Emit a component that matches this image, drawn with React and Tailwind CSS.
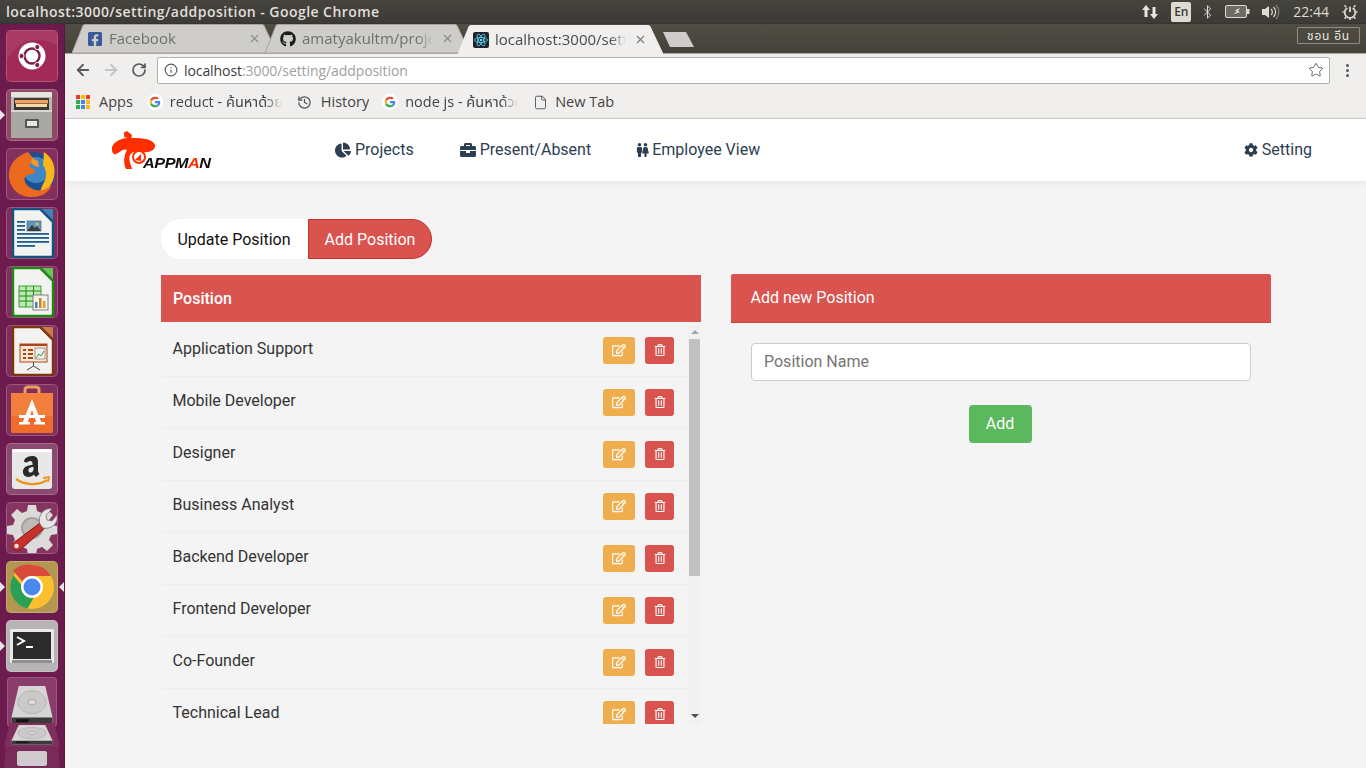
import React from "react";
import { FaChartPie, FaBriefcase, FaCog, FaRegEdit, FaRegTrashAlt, FaFacebookSquare, FaGithub, FaMale, FaFemale } from "react-icons/fa";
import { ArrowLeft, ArrowRight, RotateCw, Info, Star, History, File, X, Bluetooth } from "lucide-react";

const UI = "font-['Open_Sans','Noto_Sans','Noto_Sans_Thai',sans-serif]";

function GoogleG({ className = "" }) {
  return (
    <svg viewBox="0 0 48 48" className={className}>
      <circle cx="24" cy="24" r="24" fill="#fff" />
      <path fill="#EA4335" d="M24 14c2.600 0 4.800 1 6.500 2.500l4.600-4.600C32.200 9.300 28.400 8 24 8c-6.300 0-11.700 3.600-14.300 8.900l5.400 4.200C16.400 17 19.900 14 24 14z" />
      <path fill="#4285F4" d="M39.600 24.500c0-1.100-.1-2.200-.3-3.300H24v6.300h8.800c-.4 2-1.500 3.800-3.300 5l5.200 4c3-2.800 4.900-7 4.900-12z" />
      <path fill="#FBBC05" d="M15.100 26.900c-.3-1-.5-1.900-.5-2.900s.2-2 .5-2.900l-5.400-4.200C8.600 19.100 8 21.500 8 24s.6 4.900 1.700 7.100l5.400-4.200z" />
      <path fill="#34A853" d="M24 40c4.300 0 8-1.400 10.700-3.900l-5.200-4c-1.400 1-3.300 1.600-5.500 1.600-4.100 0-7.600-2.800-8.900-6.700l-5.400 4.200C12.300 36.400 17.700 40 24 40z" />
    </svg>
  );
}

function ReactIcon() {
  return (
    <svg viewBox="0 0 16 16" className="w-4 h-4 shrink-0">
      <rect width="16" height="16" rx="2" fill="#20232a" />
      <g fill="none" stroke="#61dafb" strokeWidth="0.8">
        <ellipse cx="8" cy="8" rx="6.500" ry="2.500" />
        <ellipse cx="8" cy="8" rx="6.500" ry="2.500" transform="rotate(60 8 8)" />
        <ellipse cx="8" cy="8" rx="6.500" ry="2.500" transform="rotate(120 8 8)" />
      </g>
      <circle cx="8" cy="8" r="1.300" fill="#61dafb" />
    </svg>
  );
}

function TabShape({ fill, stroke }) {
  return (
    <svg viewBox="0 0 205 29" preserveAspectRatio="none" className="absolute inset-0 w-full h-full">
      <path d="M0 29 L11 1.500 Q11.500 0.500 13 0.500 L190 0.500 Q191.500 0.500 192 1.500 L205 29 Z" fill={fill} stroke={stroke} strokeWidth="1" />
    </svg>
  );
}

function Tab({ icon, label, active, className = "" }) {
  return (
    <div className={`relative w-[205px] h-[29px] flex items-center pl-[16px] pr-[16px] shrink-0 ${active ? "z-10 -mb-[1px]" : ""} ${className}`}>
      <TabShape fill={active ? "#f1efee" : "#cfcdca"} stroke={active ? "#f1efee" : "#a5a39f"} />
      <div className="relative -ml-[1px] shrink-0 flex items-center">{icon}</div>
      <div className={`relative ml-[6px] mr-[8px] flex-1 overflow-hidden whitespace-nowrap text-[15px] [mask-image:linear-gradient(to_right,black_88%,transparent)] ${active ? "text-[#4a4a4a]" : "text-[#6f6f6f]"}`}>{label}</div>
      <X className={`relative shrink-0 w-[13px] h-[13px] ${active ? "text-[#7a7a7a]" : "text-[#8a8a8a]"}`} strokeWidth={2} />
    </div>
  );
}

function Tile({ bg = "bg-[#7f2f5d]", children, arrowL, arrowR, className = "" }) {
  return (
    <div className="relative h-[52px] w-[65px] shrink-0 mb-[7px] flex items-center justify-center">
      {arrowL && <div className="absolute left-0 top-1/2 -translate-y-1/2 w-0 h-0 border-y-[5px] border-y-transparent border-l-[5px] border-l-[#e8e4e6]" />}
      {arrowR && <div className="absolute right-[1px] top-1/2 -translate-y-1/2 w-0 h-0 border-y-[5px] border-y-transparent border-r-[5px] border-r-[#e8e4e6]" />}
      <div className={`w-[52px] h-[52px] rounded-[5px] border border-white/20 flex items-center justify-center overflow-hidden ${bg} ${className}`}>
        {children}
      </div>
    </div>
  );
}

const UbuntuLogo = () => (
  <svg viewBox="0 0 52 52" className="w-[52px] h-[52px] shrink-0">
    <path d="M0 32C10 10 32 4 52 16V0H0Z" fill="#fff" opacity="0.08" />
    <circle cx="26" cy="26" r="13.500" fill="#fff" />
    <circle cx="26" cy="26" r="7.500" fill="none" stroke="#7e1e4c" strokeWidth="2.400" />
    <g fill="#7e1e4c" stroke="#fff" strokeWidth="1">
      <circle cx="15.500" cy="26" r="2.600" />
      <circle cx="31.300" cy="17" r="2.600" />
      <circle cx="31.300" cy="35" r="2.600" />
    </g>
  </svg>
);

const FilesIcon = () => (
  <svg viewBox="0 0 52 52" className="w-[52px] h-[52px] shrink-0">
    <rect x="5" y="3" width="41" height="46" rx="2" fill="#b9b8b5" />
    <rect x="5" y="3" width="41" height="5" rx="1" fill="#e4e3e0" />
    <rect x="8" y="9" width="35" height="12" fill="#3a3938" />
    <rect x="9" y="11" width="33" height="3.500" fill="#f3a05a" />
    <rect x="10" y="15" width="31" height="3" fill="#f6d9a8" />
    <path d="M5 21H46V49H5Z" fill="#a9a8a5" />
    <path d="M5 21H46V23H5Z" fill="#d8d7d4" />
    <rect x="19" y="30" width="14" height="9" rx="1" fill="#555" />
    <rect x="21" y="32" width="10" height="5" fill="#e8e8e6" />
  </svg>
);

const FirefoxIcon = () => (
  <svg viewBox="0 0 52 52" className="w-[52px] h-[52px] shrink-0">
    <circle cx="27" cy="26" r="22" fill="#1f4f93" />
    <circle cx="30" cy="22" r="13" fill="#3f86c5" />
    <path d="M38 4c9 6 12 15 10 25-2 9-9 16-15 17l4-10c4-6 4-13 0-19z" fill="#f8b51c" />
    <path d="M22 4C10 8 2 17 3 29c1 13 12 21 24 20 9 0 16-5 19-12-5 5-13 7-19 4-6-2-10-8-8-12 2-3 8-2 10-5 1-2-1-3-4-4-2-1-2-5 3-9l-6-7z" fill="#ec6a1e" />
    <path d="M26 10l6 3 1 6-4-1-4-3z" fill="#f49b24" />
  </svg>
);

const LibreDoc = ({ edge, corner, children }) => (
  <svg viewBox="0 0 52 52" className="w-[52px] h-[52px] shrink-0">
    <path d="M7 2H34L47 15V48Q47 50 45 50H9Q7 50 7 48Z" fill="#f2f2f0" stroke={edge} strokeWidth="2.400" />
    <path d="M36 2H47V13Z" fill={corner} />
    {children}
  </svg>
);

const Writer = () => (
  <LibreDoc edge="#14537f" corner="#3a85b5">
    <g fill="#1c5d8e">
      <rect x="11" y="14" width="8" height="1.800" />
      <rect x="11" y="18" width="8" height="1.800" />
      <rect x="11" y="22" width="8" height="1.800" />
      <rect x="11" y="26" width="32" height="1.800" />
      <rect x="11" y="30" width="32" height="1.800" />
      <rect x="11" y="34" width="32" height="1.800" />
      <rect x="11" y="38" width="18" height="1.800" />
    </g>
    <rect x="21" y="14" width="14" height="10" fill="#5d97c5" stroke="#555" strokeWidth="0.600" />
    <path d="M21 24l5-6 3 3 2-2 4 5z" fill="#3e3e3e" />
    <circle cx="31" cy="17" r="1.500" fill="#f5c542" />
  </LibreDoc>
);

const Calc = () => (
  <LibreDoc edge="#1d8a12" corner="#62c854">
    <rect x="13" y="20" width="22" height="21" fill="#bfe9b4" stroke="#1d8a12" strokeWidth="0.800" />
    <path d="M13 25H35M13 30H35M13 35H35M20 20V41M27.500 20V41" stroke="#1d8a12" strokeWidth="1" fill="none" />
    <rect x="27" y="29" width="15" height="15" fill="#f2f2f0" stroke="#666" strokeWidth="0.800" />
    <rect x="29" y="36" width="2.500" height="6" fill="#3a85c5" />
    <rect x="33" y="32" width="2.500" height="10" fill="#e07a24" />
    <rect x="37" y="35" width="2.500" height="7" fill="#d9a62a" />
  </LibreDoc>
);

const Impress = () => (
  <LibreDoc edge="#7d3509" corner="#c77d46">
    <rect x="14" y="19" width="27" height="18" fill="#fbe6d4" stroke="#a8481a" strokeWidth="1" />
    <rect x="14" y="19" width="27" height="2" fill="#a8481a" />
    <g fill="#a8481a">
      <rect x="17" y="24" width="3" height="2" /><rect x="22" y="24" width="5" height="2" />
      <rect x="17" y="28" width="3" height="2" /><rect x="22" y="28" width="5" height="2" />
      <rect x="17" y="32" width="3" height="2" /><rect x="22" y="32" width="5" height="2" />
    </g>
    <rect x="29" y="23" width="10" height="11" fill="#eee" stroke="#666" strokeWidth="0.600" />
    <path d="M30 33l3-4 2 2 3-5" fill="none" stroke="#3a9a3a" strokeWidth="1" />
    <path d="M27.500 37V41M27.500 41L21 45M27.500 41L34 45" stroke="#444" strokeWidth="1" fill="none" />
  </LibreDoc>
);

const SoftwareIcon = () => (
  <svg viewBox="0 0 52 52" className="w-[52px] h-[52px] shrink-0">
    <path d="M19 9V6Q19 3 22 3H30Q33 3 33 6V9" fill="none" stroke="#ee9a62" strokeWidth="3" />
    <path d="M5 9H47V47Q47 49 45 49H7Q5 49 5 47Z" fill="#f47f3c" />
    <path d="M5 32H47V47Q47 49 45 49H7Q5 49 5 47Z" fill="#ef6c2c" />
    <path d="M26 15L16 40H21L26 26L31 40H36Z" fill="#fff" />
    <rect x="13" y="31" width="26" height="3" fill="#fff" />
    <rect x="13" y="38" width="11" height="2.500" fill="#fff" />
    <rect x="28" y="38" width="11" height="2.500" fill="#fff" />
  </svg>
);

const AmazonIcon = () => (
  <svg viewBox="0 0 52 52" className="w-[52px] h-[52px] shrink-0">
    <rect x="6" y="6" width="40" height="40" rx="3" fill="#e9e8e6" />
    <rect x="6" y="6" width="40" height="3" rx="1" fill="#fff" />
    <path d="M20 15c2-2 9-3 11 0 1 2 1 3 1 5v8c0 1 1 2 1.500 3l-3.500 3c-1-1-1.500-1.500-2-2.500-3 3.500-10 3.500-11-1.500-1-6 5-8 9.500-8v-1.500c0-3-3.500-3-5-1l-3.500-.5c0-2 1-3 1.500-4zm7.500 9c-3 0-5.500 1-5 4 .3 2.500 4 2 5-1z" fill="#2a2a2a" />
    <path d="M10 36c8 6 22 7 31 1" fill="none" stroke="#f0931e" strokeWidth="2.200" />
    <path d="M37 35l6-1-1 5" fill="none" stroke="#f0931e" strokeWidth="1.800" />
  </svg>
);

const SettingsIcon = () => (
  <svg viewBox="0 0 52 52" className="w-[52px] h-[52px] shrink-0">
    <path d="M22 3h8l1 6 5 2 5-4 6 6-4 5 2 5 6 1v8l-6 1-2 5 4 5-6 6-5-4-5 2-1 6h-8l-1-6-5-2-5 4-6-6 4-5-2-5-6-1v-8l6-1 2-5-4-5 6-6 5 4 5-2z" fill="#dcdbd9" />
    <circle cx="26" cy="26" r="11" fill="#a3a09e" />
    <circle cx="26" cy="26" r="9" fill="#bdbab8" />
    <path d="M6 42l28-21 5 5-25 22c-4 2-10-2-8-6z" fill="#c9302c" stroke="#7a1a18" strokeWidth="1" />
    <circle cx="10.500" cy="44" r="2.200" fill="#e9e9e9" />
    <path d="M34 22c-3-8 4-17 12-15l-6 6 1 5 5 1 5-6c2 8-6 15-14 13z" fill="#e6e6e6" stroke="#777" strokeWidth="0.800" />
  </svg>
);

const ChromeIcon = () => (
  <svg viewBox="0 0 52 52" className="w-[52px] h-[52px] shrink-0">
    <circle cx="26" cy="26" r="22" fill="#fbc02d" />
    <path d="M26 4a22 22 0 0 1 19 11H26a11 11 0 0 0-9.500 5.500L7 9.800A22 22 0 0 1 26 4z" fill="#d94a3d" />
    <path d="M7.500 14.200A22 22 0 0 0 21.500 47.500L31 31a11 11 0 0 1-14.500-5.500z" fill="#2a9f55" />
    <circle cx="26" cy="26" r="11" fill="#fff" />
    <circle cx="26" cy="26" r="8.500" fill="#4a88ee" />
  </svg>
);

const TerminalIcon = () => (
  <svg viewBox="0 0 52 52" className="w-[52px] h-[52px] shrink-0">
    <rect x="4" y="9" width="44" height="34" rx="1.500" fill="#e9e9e7" />
    <rect x="6" y="40" width="40" height="3" fill="#8f8f8d" />
    <rect x="7" y="12" width="38" height="27" fill="#2b2b2b" />
    <path d="M11 17l7 4-7 4" fill="none" stroke="#fff" strokeWidth="2" />
    <rect x="20" y="26" width="7" height="2" fill="#fff" />
  </svg>
);

const DriveIcon = ({ h = 52 }) => (
  <svg viewBox="0 0 52 42" preserveAspectRatio="none" className="w-[46px] shrink-0" style={{ height: h }}>
    <path d="M11 0H41L49 32V39Q49 41 47 41H5Q3 41 3 39V32Z" fill="#d6d5d3" />
    <ellipse cx="26" cy="17" rx="16" ry="12" fill="#cbcac8" stroke="#aaa" strokeWidth="0.800" />
    <ellipse cx="26" cy="17" rx="4.500" ry="3" fill="#dedddb" stroke="#999" strokeWidth="0.800" />
    <path d="M3 33H49V39Q49 41 47 41H5Q3 41 3 39Z" fill="#3a3a3a" />
    <rect x="8" y="35" width="14" height="3" fill="#111" />
  </svg>
);

function Launcher() {
  return (
    <div className="relative w-[65px] shrink-0 bg-[#6d1b4e] border-r border-[#5a1640] overflow-hidden pt-[6px] flex flex-col items-center">
      <Tile bg="bg-[#a02b56]"><UbuntuLogo /></Tile>
      <Tile bg="bg-[#8d4a62]" arrowL><FilesIcon /></Tile>
      <Tile bg="bg-[#83305f]"><FirefoxIcon /></Tile>
      <Tile><Writer /></Tile>
      <Tile><Calc /></Tile>
      <Tile><Impress /></Tile>
      <Tile><SoftwareIcon /></Tile>
      <Tile bg="bg-[#8b4a70]"><AmazonIcon /></Tile>
      <Tile bg="bg-[#85355f]"><SettingsIcon /></Tile>
      <Tile bg="bg-[#b3964f]" arrowL arrowR><ChromeIcon /></Tile>
      <Tile bg="bg-[#b8b3b5]" arrowL><TerminalIcon /></Tile>
      <div className="h-[50px] w-[50px] shrink-0 -mt-[2px] rounded-[4px] bg-[#8a3d6a] border border-white/15 flex items-end justify-center overflow-hidden">
        <DriveIcon h={40} />
      </div>
      <div className="h-[24px] w-[56px] shrink-0 -mt-[4px] bg-[#7f2f5d] [clip-path:polygon(10%_0,90%_0,100%_100%,0_100%)] flex items-center justify-center overflow-hidden">
        <DriveIcon h={20} />
      </div>
      <div className="h-[22px] w-[56px] shrink-0 bg-[#7a2a58] [clip-path:polygon(3%_0,97%_0,100%_100%,0_100%)] flex items-center justify-center">
        <div className="w-[30px] h-[15px] bg-[#cfcbcc] rounded-[2px]" />
      </div>
    </div>
  );
}

function TopBar() {
  return (
    <div className="h-[24px] shrink-0 bg-gradient-to-b from-[#46443e] to-[#3b3a36] flex items-center pl-[6px] text-[#e0dfdb] border-b border-[#35342f]">
      <div className="flex-1 text-[14px] font-semibold whitespace-nowrap tracking-[0.45px]">localhost:3000/setting/addposition - Google Chrome</div>
      <div className="flex items-center h-full text-[#dfdbd2]">
        <svg viewBox="0 0 18 16" className="w-[18px] h-[16px] mr-[12px] fill-[#e8e6e1]">
          <path d="M5 1l4 5H6.500v7h-3V6H1zM13 15l-4-5h2.500V3h3v7H17z" />
        </svg>
        <div className="w-[20px] h-[20px] rounded-[2px] bg-[#dfdbd2] text-[#3c3b37] text-[12px] font-semibold flex items-center justify-center mr-[9px]">En</div>
        <Bluetooth className="w-[15px] h-[18px] mr-[10px] text-[#e8e6e1]" strokeWidth={1.500} />
        <svg viewBox="0 0 25 13" className="w-[25px] h-[13px] mr-[11px]">
          <rect x="0.500" y="0.500" width="21" height="12" rx="1.500" fill="#6d6b65" stroke="#dfdbd2" />
          <rect x="22" y="4" width="2.500" height="5" fill="#dfdbd2" />
          <path d="M15 3l-5 2.500 2 1-4 3 7-2.500-2-1z" fill="#e8e6e1" />
        </svg>
        <svg viewBox="0 0 20 16" className="w-[20px] h-[16px] mr-[12px]">
          <path d="M1 5H4L8 2V14L4 11H1Z" fill="#dfdbd2" />
          <path d="M10 5a4 4 0 0 1 0 6M12.500 3a7 7 0 0 1 0 10" fill="none" stroke="#dfdbd2" strokeWidth="1.200" />
          <path d="M15 1a10 10 0 0 1 0 14" fill="none" stroke="#85827b" strokeWidth="1.200" />
        </svg>
        <span className="text-[14px] text-[#dfdbd2] mr-[13px]">22:44</span>
        <svg viewBox="0 0 18 18" className="w-[16px] h-[16px] mr-[8px]">
          <path d="M6 4.500a6 6 0 1 0 6 0" fill="none" stroke="#dfdbd2" strokeWidth="2" />
          <path d="M9 3v6" stroke="#dfdbd2" strokeWidth="2" />
          <path d="M3 1.500L4.500 3.500M15 1.500L13.500 3.500M0.500 9H2M16 9H17.500M3 16.500L4.500 14.500M15 16.500L13.500 14.500M9 16V18" stroke="#dfdbd2" strokeWidth="1.800" />
        </svg>
      </div>
    </div>
  );
}

function TabStrip() {
  return (
    <div className="relative z-10 h-[29px] shrink-0 bg-gradient-to-b from-[#4f4c43] to-[#45433b] flex items-end pl-[7px]">
      <Tab icon={<FaFacebookSquare className="w-4 h-4 text-[#3b5998]" />} label="Facebook" />
      <Tab className="-ml-[12px]" icon={<FaGithub className="w-4 h-4 text-[#1b1b1b]" />} label="amatyakultm/project" />
      <Tab className="-ml-[12px]" active icon={<ReactIcon />} label="localhost:3000/setting" />
      <svg viewBox="0 0 33 15" className="w-[33px] h-[15px] -ml-[1px] mb-[6px]">
        <path d="M1 0H24L32 15H8Z" fill="#cfcdca" />
      </svg>
      <div className="absolute right-[6px] top-[3px] h-[17px] w-[63px] rounded-[1px] border border-[#8f8c84] text-[#e8e6e1] text-[12px] flex items-center justify-center tracking-[0.8px] font-['Noto_Sans_Thai','Noto_Sans',sans-serif]">ชอน อีน</div>
    </div>
  );
}

function Toolbar() {
  return (
    <div className="h-[33px] shrink-0 bg-[#f1efee] flex items-center border-t border-[#a9a7a3] pl-[9px]">
      <ArrowLeft className="w-[18px] h-[18px] text-[#5a5a5a]" strokeWidth={2.400} />
      <ArrowRight className="w-[18px] h-[18px] ml-[10px] text-[#c4c4c4]" strokeWidth={2.400} />
      <RotateCw className="w-[16px] h-[16px] ml-[11px] text-[#5a5a5a]" strokeWidth={2.600} />
      <div className="ml-[10px] w-[1173px] h-[27px] bg-white rounded-[2px] border border-[#b3b1ae] flex items-center pl-[6px] pr-[5px]">
        <Info className="w-[14px] h-[14px] text-[#5a5a5a]" strokeWidth={2} />
        <div className="ml-[6px] flex-1 text-[14px] tracking-[-0.08px] whitespace-nowrap text-[#3c3c3c]">localhost<span className="text-[#a0a0a0]">:3000/setting/addposition</span></div>
        <Star className="w-[16px] h-[16px] text-[#6a6a6a]" strokeWidth={1.500} />
      </div>
      <div className="ml-[16px] flex flex-col gap-[2px]">
        <span className="w-[3px] h-[3px] rounded-full bg-[#555]" />
        <span className="w-[3px] h-[3px] rounded-full bg-[#555]" />
        <span className="w-[3px] h-[3px] rounded-full bg-[#555]" />
      </div>
    </div>
  );
}

function Bookmark({ icon, label, w, gap = "ml-[8px]", className = "" }) {
  return (
    <div className={`flex items-center shrink-0 ${className}`}>
      {icon}
      <span className={`whitespace-nowrap overflow-hidden text-[14.5px] text-[#444] ${gap} ${w || ""}`}>{label}</span>
    </div>
  );
}

function Bookmarks() {
  const dots = ["#e53935","#fbbc05","#e53935","#34a853","#4285f4","#fbbc05","#34a853","#4285f4","#fbbc05"];
  return (
    <div className="h-[33px] shrink-0 bg-[#f1efee] border-b border-[#cfcdca] flex items-center pl-[11px]">
      <Bookmark
        gap="ml-[9px]"
        icon={<div className="grid grid-cols-3 gap-[1px] w-[14px] h-[14px]">{dots.map((c, i) => <span key={i} className="w-[4px] h-[4px]" style={{ background: c }} />)}</div>}
        label="Apps"
      />
      <Bookmark className="ml-[14px]" gap="ml-[7px]" icon={<GoogleG className="w-[16px] h-[16px]" />} w="w-[112px] [mask-image:linear-gradient(to_right,black_85%,transparent)]" label="reduct - ค้นหาด้วย" />
      <Bookmark className="ml-[15px]" gap="ml-[9px]" icon={<History className="w-[15px] h-[15px] text-[#555]" strokeWidth={2} />} label="History" />
      <Bookmark className="ml-[13px]" gap="ml-[7px]" icon={<GoogleG className="w-[16px] h-[16px]" />} w="w-[113px] [mask-image:linear-gradient(to_right,black_85%,transparent)]" label="node js - ค้นหาด้วย" />
      <Bookmark className="ml-[15px]" gap="ml-[7px]" icon={<File className="w-[15px] h-[15px] text-[#555]" strokeWidth={1.500} />} label="New Tab" />
    </div>
  );
}

function NavItem({ icon, label, className = "" }) {
  return (
    <div className={`flex items-center gap-[4px] text-[16px] text-[#2c3e50] ${className}`}>
      {icon}
      <span>{label}</span>
    </div>
  );
}

function Logo() {
  return (
    <div className="relative w-[102px] h-[40px]">
      <svg viewBox="0 0 102 40" className="absolute inset-0 w-full h-full">
        <path d="M13 2.500 L16 1 L21 5 L20 9 L13 7Z" fill="#ff2d00" />
        <path d="M1 20C0 12 12 7 22 8C32 8 42 9 44 15C45 20 38 23 32 22C26 21 21 21 19 25C17 30 20 34 21 39L15 39C12 33 13 25 16 20C12 18 8 23 5 24C3 25 1 23 1 20Z" fill="#ff2d00" />
        <circle cx="28" cy="27" r="6" fill="none" stroke="#ff2d00" strokeWidth="2" />
        <path d="M24 30L30 24V31Z" fill="#ff2d00" />
      </svg>
      <span className="absolute left-[32px] top-[25px] text-[14px] font-bold italic text-[#111] tracking-[-0.4px] font-['Liberation_Sans',sans-serif] leading-[16px] origin-left scale-x-[1.16]">APPM<span className="text-[#ff2d00]">A</span>N</span>
    </div>
  );
}

function Navbar() {
  return (
    <div className="h-[62px] shrink-0 bg-white shadow-[0_1px_6px_rgba(0,0,0,0.08)] relative flex items-center pl-[46px] pr-[54px] font-['Roboto',sans-serif]">
      <Logo />
      <NavItem className="ml-[122px]" icon={<FaChartPie className="w-[16px] h-[16px]" />} label="Projects" />
      <NavItem className="ml-[46px]" icon={<FaBriefcase className="w-[16px] h-[16px]" />} label="Present/Absent" />
      <NavItem
        className="ml-[45px] gap-[3px]"
        icon={<span className="flex items-center"><FaMale className="w-[7px] h-[14px] -mx-[0.5px]" /><FaFemale className="w-[7px] h-[14px] -mx-[0.5px]" /></span>}
        label="Employee View"
      />
      <NavItem className="ml-auto" icon={<FaCog className="w-[14px] h-[14px]" />} label="Setting" />
    </div>
  );
}

const POSITIONS = ["Application Support","Mobile Developer","Designer","Business Analyst","Backend Developer","Frontend Developer","Co-Founder","Technical Lead"];

function PositionRow({ name }) {
  return (
    <div className="h-[52px] shrink-0 flex items-center pl-[11.5px] pr-[14px] border-b border-[#eeeeee]">
      <span className="flex-1 -mt-[4px] text-[16px] text-[#333] leading-[24px]">{name}</span>
      <div className="w-[32px] h-[27px] rounded-[3px] bg-[#f0ad4e] flex items-center justify-center text-white">
        <FaRegEdit className="w-[14px] h-[14px] -mt-[2px]" />
      </div>
      <div className="ml-[10px] w-[29px] h-[27px] rounded-[3px] bg-[#d9534f] flex items-center justify-center text-white">
        <FaRegTrashAlt className="w-[12px] h-[12px] -mt-[2px]" />
      </div>
    </div>
  );
}

function Main() {
  return (
    <div className="flex-1 min-h-0 bg-[#f4f4f4] pl-[96px] pt-[38px] font-['Roboto',sans-serif] overflow-hidden">
      <div className="flex h-[40px] w-[271px] text-[16px]">
        <div className="w-[147px] pt-[1px] pr-[1px] bg-white rounded-l-[20px] flex items-center justify-center text-[#111]">Update Position</div>
        <div className="w-[124px] pt-[1px] bg-[#d9534f] border border-[#c9302c] rounded-r-[20px] flex items-center justify-center text-white">Add Position</div>
      </div>
      <div className="flex gap-[30px] mt-[16px] items-start">
        <div className="w-[540px]">
          <div className="h-[47px] bg-[#d9534f] flex items-center pl-[12px] text-white font-medium text-[16px]">Position</div>
          <div className="relative mt-[3px] h-[399px] overflow-hidden pr-[13px]">
            <div className="flex flex-col">
              {POSITIONS.map((p) => <PositionRow key={p} name={p} />)}
            </div>
            <div className="absolute right-0 top-0 bottom-0 w-[13px] bg-[#f1f1f1]">
              <div className="absolute left-[3px] top-[5px] w-0 h-0 border-x-[4px] border-x-transparent border-b-[4px] border-b-[#a3a3a3]" />
              <div className="absolute left-[1px] right-[1px] top-[14px] h-[237px] bg-[#c1c1c1]" />
              <div className="absolute left-[3px] bottom-[6px] w-0 h-0 border-x-[4px] border-x-transparent border-t-[4px] border-t-[#505050]" />
            </div>
          </div>
        </div>
        <div className="w-[540px] -mt-[1px]">
          <div className="h-[49px] bg-[#d9534f] rounded-t-[2px] border-b border-[#c9453f] flex items-center pl-[19.5px] text-white text-[16px]">Add new Position</div>
          <div className="px-[20px] pt-[20px] flex flex-col items-center">
            <div className="w-[500px] h-[38px] bg-white border border-[#cccccc] rounded-[4px] flex items-center pl-[12px] text-[16px] text-[#757575]">Position Name</div>
            <div className="mt-[24px] mr-[2px] w-[63px] h-[38px] rounded-[4px] bg-[#5cb85c] text-white text-[16px] flex items-center justify-center">Add</div>
          </div>
        </div>
      </div>
    </div>
  );
}

export default function App() {
  return (
    <div className={`h-screen w-full flex flex-col overflow-hidden ${UI}`}>
      <TopBar />
      <div className="flex flex-1 min-h-0">
        <Launcher />
        <div className="flex-1 min-w-0 flex flex-col">
          <TabStrip />
          <Toolbar />
          <Bookmarks />
          <Navbar />
          <Main />
        </div>
      </div>
    </div>
  );
}
